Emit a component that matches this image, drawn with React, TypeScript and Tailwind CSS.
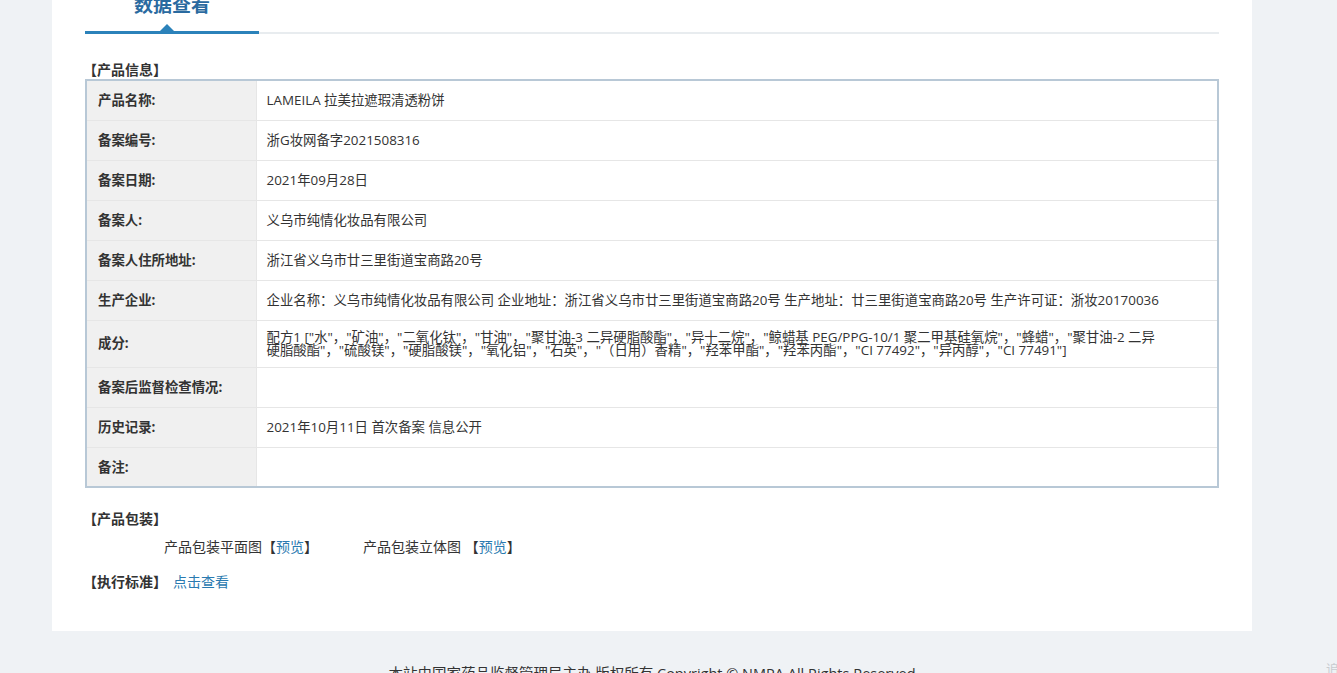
const font = "font-['Open_Sans','Noto_Sans_CJK_SC',sans-serif]";

const rows: { label: string; value: string; tall?: boolean }[] = [
  { label: "产品名称:", value: "LAMEILA 拉美拉遮瑕清透粉饼" },
  { label: "备案编号:", value: "浙G妆网备字2021508316" },
  { label: "备案日期:", value: "2021年09月28日" },
  { label: "备案人:", value: "义乌市纯情化妆品有限公司" },
  { label: "备案人住所地址:", value: "浙江省义乌市廿三里街道宝商路20号" },
  {
    label: "生产企业:",
    value:
      "企业名称：义乌市纯情化妆品有限公司 企业地址：浙江省义乌市廿三里街道宝商路20号 生产地址：廿三里街道宝商路20号 生产许可证：浙妆20170036",
  },
  {
    label: "成分:",
    tall: true,
    value:
      "配方1 [\"水\"，\"矿油\"，\"二氧化钛\"，\"甘油\"，\"聚甘油-3 二异硬脂酸酯\"，\"异十二烷\"，\"鲸蜡基 PEG/PPG-10/1 聚二甲基硅氧烷\"，\"蜂蜡\"，\"聚甘油-2 二异硬脂酸酯\"，\"硫酸镁\"，\"硬脂酸镁\"，\"氧化铝\"，\"石英\"，\"（日用）香精\"，\"羟苯甲酯\"，\"羟苯丙酯\"，\"CI 77492\"，\"异丙醇\"，\"CI 77491\"]",
  },
  { label: "备案后监督检查情况:", value: "" },
  { label: "历史记录:", value: "2021年10月11日 首次备案 信息公开" },
  { label: "备注:", value: "" },
];

export default function App() {
  return (
    <div className={`relative min-h-screen bg-[#eff2f5] text-[13.4px] text-[#333] ${font}`}>
      <div className="ml-[52px] w-[1200px] bg-white px-[33px] pb-[40px]">
        {/* tab header */}
        <div className="relative h-[34px] border-b-2 border-[#e8ecef]">
          <div className="absolute left-0 bottom-[-2px] h-[34px] w-[174px] border-b-[3px] border-[#2b82ba]">
            <div className="mt-[-12px] text-center text-[19px] font-bold leading-[34px] text-[#2a6aa0]">数据查看</div>
            <div className="absolute bottom-0 left-[75px] h-0 w-0 border-x-[7px] border-b-[7px] border-x-transparent border-b-[#2b82ba]" />
          </div>
        </div>

        <div className="mt-[27px] ml-[-2px] text-[14px] font-bold leading-[18px]">【产品信息】</div>
        <table className="w-full border-collapse border-2 border-[#b8c8d6]">
          <tbody>
            {rows.map((r) => (
              <tr key={r.label} className={`border-b border-[#e6e6e6] ${r.tall ? "h-[47px]" : "h-[40px]"}`}>
                <td className="w-[170px] border-r border-[#e6e6e6] bg-[#f0f0f0] pl-[11px] font-bold">{r.label}</td>
                <td className={`pl-[10px] pr-[54px] ${r.tall ? "leading-[13px]" : ""}`}>{r.value}</td>
              </tr>
            ))}
          </tbody>
        </table>

        <div className="mt-[22px] ml-[-2px] text-[14px] font-bold leading-[18px]">【产品包装】</div>
        <div className="mt-[10px] flex pl-[79px] text-[14px] leading-[18px]">
          <span>产品包装平面图【<span className="text-[#2a7ab0]">预览</span>】</span>
          <span className="ml-[45px]">产品包装立体图 【<span className="text-[#2a7ab0]">预览</span>】</span>
        </div>
        <div className="mt-[17px] ml-[-2px] flex text-[14px] leading-[18px]">
          <span className="font-bold">【执行标准】</span>
          <span className="ml-[6px] text-[#2a7ab0]">点击查看</span>
        </div>
      </div>
      <div className="ml-[52px] w-[1200px] pt-[32px] text-center text-[14.5px] text-[#333]">
        本站由国家药品监督管理局主办 版权所有 Copyright © NMPA All Rights Reserved
      </div>
      <div className="absolute right-[-2px] top-[660px] text-[13px] text-[#c8ccd0]">追</div>
    </div>
  );
}
